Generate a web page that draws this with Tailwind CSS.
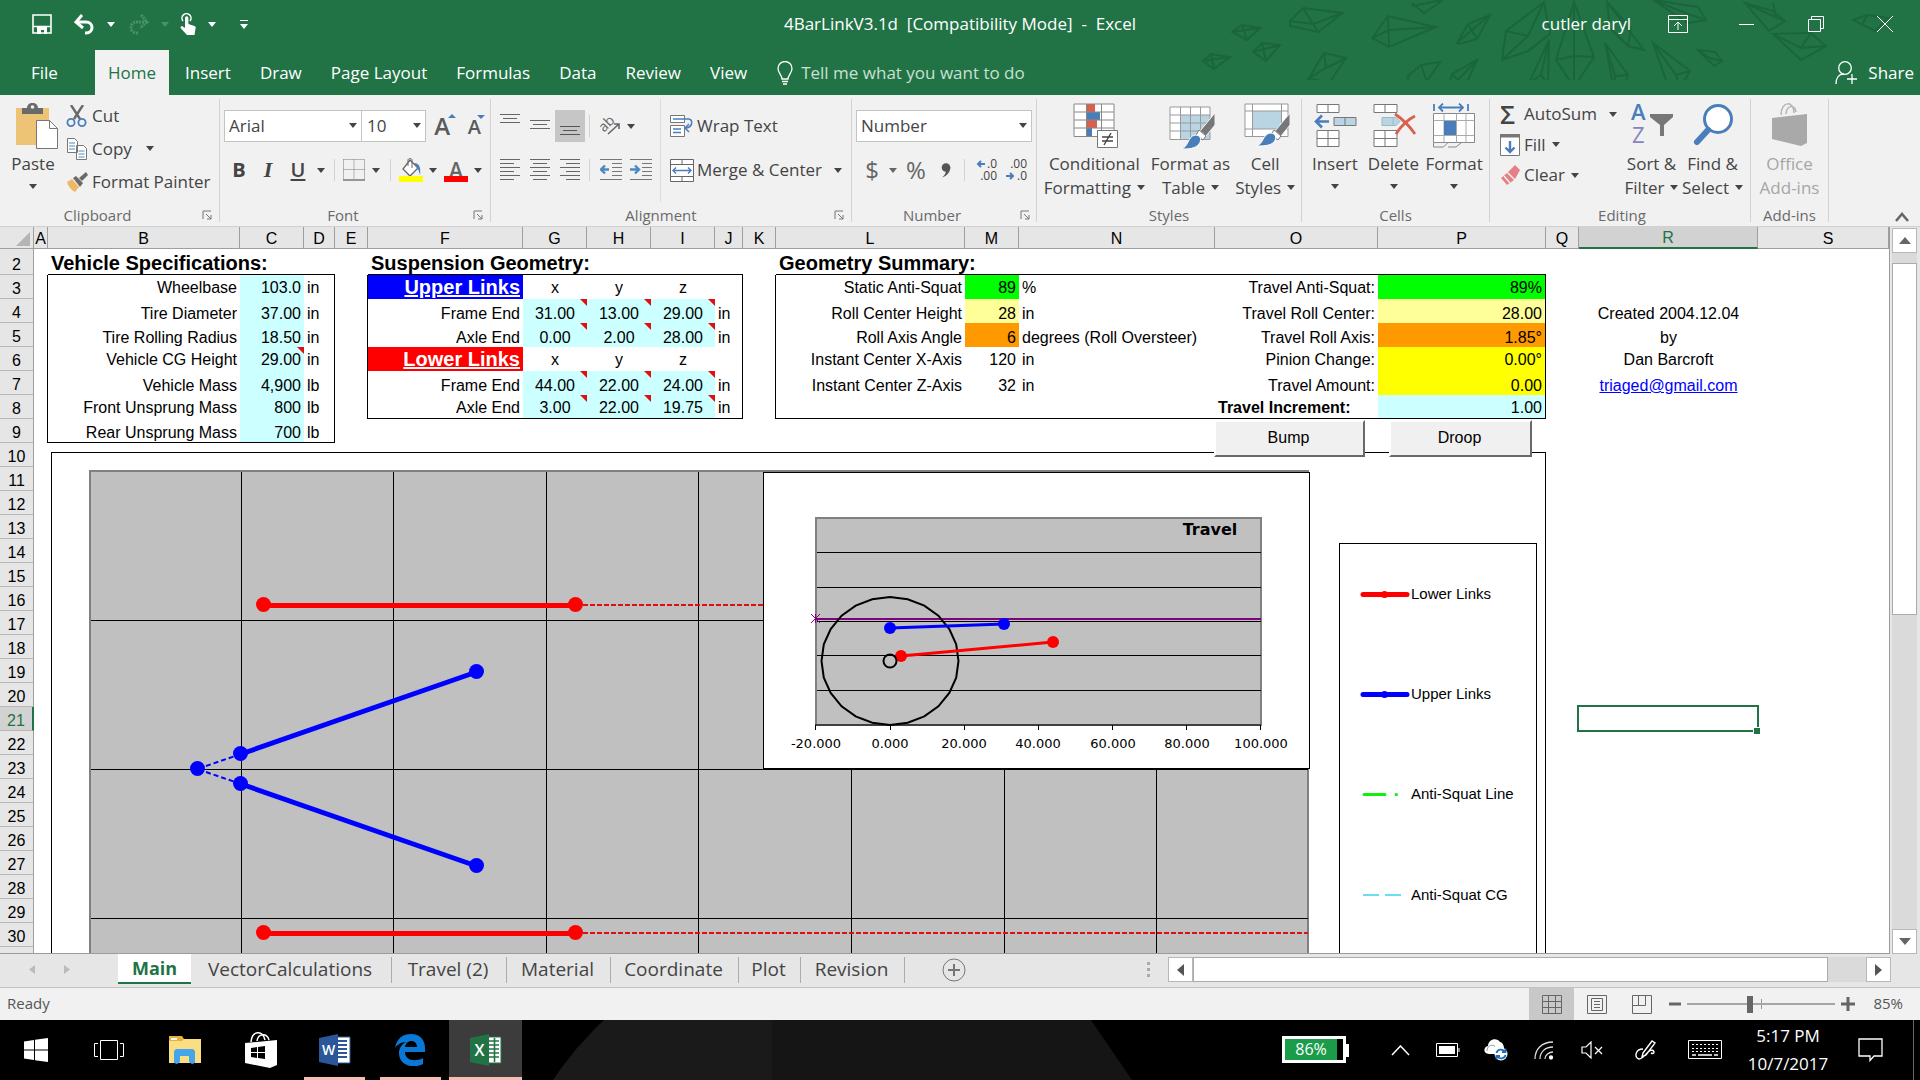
<!DOCTYPE html>
<html lang="en">

<head>
    <meta charset="UTF-8">
    <meta name="viewport" content="width=device-width, initial-scale=1.0">
    <title>4BarLinkV3.1d - Excel</title>
    <!-- Tailwindcss -->
    <script src="https://cdn.jsdelivr.net/npm/@tailwindcss/browser@4"></script>
</head>

<body class="h-screen flex flex-col overflow-hidden bg-[#e6e6e6] font-['Open_Sans',sans-serif] text-[17px] leading-6 text-[#444]">

    <!-- shared symbols -->
    <svg class="hidden">
        <symbol id="caret" viewBox="0 0 8 5"><path d="M0 0h8L4 5z" fill="currentColor" /></symbol>
        <symbol id="launcher" viewBox="0 0 10 10"><path d="M1 9V1h8M4 4l5 5M9 5v4H5" fill="none" stroke="#777" /></symbol>
    </svg>

    <!-- Title bar + tabs -->
    <header class="relative h-[95px] shrink-0 bg-[#217346] text-white">
        <svg class="absolute right-0 top-0 w-[720px] h-[80px]" viewBox="1200 0 720 80" fill="none" stroke="#1b653c" stroke-width="2">
            <path d="M1232 32l10-7 18 3-13 12zM1232 32l28-4M1242 25l5 15M1253 52l9-9 18 2-14 16zM1253 52l27-7M1262 43l4 18M1203 61l8-7 19 3-16 12zM1203 61l27-4M1211 54l3 15" />
            <path d="M1290 21l13-13 40 5-25 19-28-6zM1303 8l10 16 30-11M1290 21l23 3 5 8M1372 38l16-22 48 11-47 20zM1372 38l17-8 47-3M1388 16l1 31M1309 78l15-25 22 5-16 24-22-3zM1309 78l17-10 20-10M1324 53l2 15M1408 76l13-11 19-3-13 19-18 3zM1421 65l6 16" />
            <path d="M1457 43l11-19 22-9-13 24-18 5zM1457 43l16-14 17-14M1468 24l9 15M1412 6l30-6M1412 3l12 10 18-12M1447 91l5-17 25-14-8 18-6 14M1452 74l6 6 19-20" />
            <path d="M1502 60l4-29 38-29 6 32-22 17zM1506 31l22 5 16-34M1528 36l-26 24M1556 60l18-58 20 55-20 30zM1556 60l18-4 20 1M1574 2v85M1529 83l20-43-1 44-9 8zM1529 83l12-8 8-35M1541 75l7 9M1605 43l23 32-5 14-8 6zM1605 43l10 33v19M1615 76l13-1M1653 43l37 28-10 17-12-2zM1653 43l23 32 14-4M1676 75l4 13" />
            <path d="M1607 2l37 48-16-4-18-18zM1607 2l24 26-3 18M1653 0l45 7 8 13-18 3zM1653 0l35 14 18 6M1698 50l17 2 7 9-8 5zM1698 50l12 8 12 3M1745 3l28 8 12 10-16 10zM1745 3l30 14 10 4M1773 3l3 14M1773 34l38-1 15 13-25 14zM1773 34l28 14 25-2M1811 33l-10 15M1853 20l14-5 21 3-13 13zM1867 15l-5 10" />
        </svg>

        <div class="relative grid grid-cols-[1fr_auto_1fr] items-center h-[46px] pt-[2px]">
            <div class="flex items-center pl-[32px]">
                <button aria-label="Save" class="w-[20px]"><svg class="w-[20px] h-[20px]" viewBox="0 0 20 20"><path d="M1 1h18v18H1zM1 12.500h18" fill="none" stroke="#fff" stroke-width="1.600" /><path d="M5 13h10v7h-3v-4H9v4H5z" fill="#fff" /></svg></button>
                <button aria-label="Undo" class="ml-[21px] w-[22px]"><svg class="w-[22px] h-[21px]" viewBox="0 0 22 21" fill="none" stroke="#fff" stroke-width="3"><path d="M3 8h10c8 0 8 11 0 11h-1" /><path d="M9 1L3 8l7 6" /></svg></button>
                <svg class="ml-[12px] w-[8px] h-[5px]"><use href="#caret" /></svg>
                <button aria-label="Redo" class="ml-[13px] w-[22px] text-[#4b9068]"><svg class="w-[22px] h-[21px]" viewBox="0 0 22 21" fill="none" stroke="currentColor" stroke-width="3" stroke-dasharray="2 1"><path d="M19 8H9C1 8 1 19 9 19h1" /><path d="M13 1l6 7-7 6" /></svg></button>
                <svg class="ml-[11px] w-[8px] h-[5px] text-[#4b9068]"><use href="#caret" /></svg>
                <button aria-label="Touch mode" class="ml-[11px] w-[16px]"><svg class="w-[16px] h-[22px]" viewBox="0 0 16 22"><path d="M3 8a4.500 4.500 0 1 1 7 0" fill="none" stroke="#fff" stroke-width="1.500" /><path d="M5 5a1.700 1.700 0 0 1 3.400 0v6l6 2c1 .4 1.400 1 1.200 2L14.500 22H7L1 15.500c-1.400-1.800.8-3 2.200-1.800L5 15z" fill="#fff" /></svg></button>
                <svg class="ml-[12px] w-[8px] h-[5px]"><use href="#caret" /></svg>
                <button aria-label="Customize" class="ml-[24px]"><svg class="w-[8px] h-[9px]" viewBox="0 0 8 9" fill="#fff"><path d="M0 0h8v1H0zM0 4h8L4 9z" /></svg></button>
            </div>
            <h1 class="whitespace-pre">4BarLinkV3.1d  [Compatibility Mode]  -  Excel</h1>
            <div class="flex items-center justify-end pr-px">
                <span class="mr-[12px]">cutler daryl</span>
                <button aria-label="Ribbon options" class="w-[69px] flex justify-center"><svg class="w-[20px] h-[18px]" viewBox="0 0 20 18" fill="none" stroke="#fff"><path d="M.5.5h19v17H.5zM.5 4.500h19M10 15V7M6 11l4-4 4 4" /></svg></button>
                <button aria-label="Minimize" class="w-[69px] flex justify-center"><svg class="w-[15px] h-[15px]" viewBox="0 0 15 15" stroke="#fff"><path d="M0 7.500h15" /></svg></button>
                <button aria-label="Restore" class="w-[69px] flex justify-center"><svg class="w-[16px] h-[16px]" viewBox="0 0 16 16" fill="none" stroke="#fff"><path d="M.5 3.500h12v12H.5zM3.500 3.500v-3h12v12h-3" /></svg></button>
                <button aria-label="Close" class="w-[69px] flex justify-center"><svg class="w-[16px] h-[16px]" viewBox="0 0 16 16" stroke="#fff"><path d="M0 0l16 16M16 0L0 16" /></svg></button>
            </div>
        </div>

        <nav class="relative flex items-stretch h-[49px] pt-1">
            <a href="#" class="w-[95px] pl-[31px] flex items-center">File</a>
            <a href="#" class="px-[13px] flex items-center bg-[#f1f1f1] text-[#217346]">Home</a>
            <a href="#" class="pl-[16px] pr-[14px] flex items-center">Insert</a>
            <a href="#" class="pl-[15px] pr-[14px] flex items-center">Draw</a>
            <a href="#" class="pl-[15px] pr-[14px] flex items-center">Page Layout</a>
            <a href="#" class="pl-[15px] pr-[14px] flex items-center">Formulas</a>
            <a href="#" class="pl-[15px] pr-[14px] flex items-center">Data</a>
            <a href="#" class="pl-[15px] pr-[14px] flex items-center">Review</a>
            <a href="#" class="pl-[15px] pr-[14px] flex items-center">View</a>
            <label class="flex items-center flex-1 ml-4" aria-label="Tell me">
                <svg class="w-[16px] h-[24px] mr-2" viewBox="0 0 16 24" fill="none" stroke="#fff" stroke-width="1.300"><path d="M5 18c0-4-4-6-4-10.500a7 7 0 0 1 14 0C15 12 11 14 11 18zM5 20.500h6M6 23h4" /></svg>
                <input type="text" placeholder="Tell me what you want to do" class="w-[300px] bg-transparent outline-none placeholder:text-[#c9e0d2]">
            </label>
            <button class="flex items-center pr-[6px]">
                <svg class="w-[23px] h-[24px] mr-[10px]" viewBox="0 0 23 24" fill="none" stroke="#fff" stroke-width="1.300"><circle cx="10" cy="7" r="6.300" /><path d="M1 23c0-6 3-10 8-10M17 13v10M12 18h10" /></svg>
                Share
            </button>
        </nav>
    </header>

    <!-- Ribbon -->
    <section class="flex h-[132px] shrink-0 bg-[#f1f1f1] border-b border-[#d0d0d0] pt-1 pb-1">

        <div class="w-[220px] flex flex-col border-r border-[#d2d2d2]">
            <div class="flex-1 flex">
                <button class="w-[66px] flex flex-col items-center pt-1">
                    <svg class="w-[42px] h-[46px] mb-[3px] ml-2" viewBox="0 0 42 46">
                        <path d="M0 5h33v37H0z" fill="#edc375" /><path d="M6 5h5c0-7 11-7 11 0h5v6H6z" fill="#6a6a6a" /><circle cx="16.500" cy="4" r="1.800" fill="#f1f1f1" />
                        <path d="M20.500 17.500h13l8 8v20h-21z" fill="#fff" stroke="#777" /><path d="M33.500 17.500v8h8" fill="none" stroke="#777" />
                    </svg>
                    Paste
                    <svg class="w-[8px] h-[5px] mt-2"><use href="#caret" /></svg>
                </button>
                <div class="flex flex-col">
                    <button class="h-[33px] flex items-center"><svg class="w-[22px] h-[22px] mr-[4px]" viewBox="0 0 22 22" fill="none"><path d="M5 0l9 14M17 0L8 14" stroke="#6a6a6a" stroke-width="2.400" /><circle cx="5" cy="17.500" r="3.600" stroke="#4a7ebb" stroke-width="1.800" /><circle cx="16" cy="17.500" r="3.600" stroke="#4a7ebb" stroke-width="1.800" /></svg>Cut</button>
                    <button class="h-[33px] flex items-center"><svg class="w-[22px] h-[22px] mr-[4px]" viewBox="0 0 22 22" fill="#fff" stroke="#777"><path d="M1.500.5h7l3 3v11h-10zM10.500 7.500h7l3 3v11h-10z" /><path d="M3 5h6M3 8h6M3 11h6M12.500 13h6M12.500 16h6M12.500 19h6" stroke="#4a8ac0" /></svg>Copy<svg class="w-[8px] h-[5px] ml-[14px]"><use href="#caret" /></svg></button>
                    <button class="h-[33px] flex items-center whitespace-nowrap"><svg class="w-[22px] h-[20px] mr-[4px]" viewBox="0 0 22 20"><path d="M1 10l5-3 7 8-4 5C5 18 2 14 1 10z" fill="#edb968" /><path d="M7 6l3-2 7 7-3 4z" fill="#6a6a6a" /><path d="M13 6l7-6 2 3-6 6z" fill="#6a6a6a" /></svg>Format Painter</button>
                </div>
            </div>
            <div class="relative h-5 pt-[6px] flex justify-center items-center text-[15px] text-[#6a6a6a] pr-6">Clipboard<svg class="absolute right-[7px] bottom-[2px] w-[10px] h-[10px]"><use href="#launcher" /></svg></div>
        </div>

        <div class="w-[271px] flex flex-col border-r border-[#d2d2d2] px-1">
            <div class="flex-1 flex flex-col pt-[11px]">
                <div class="flex items-center h-[32px]">
                    <span class="relative"><select aria-label="Font" class="appearance-none block w-[138px] h-[32px] bg-white border border-[#c0c6c0] pl-1"><option>Arial</option></select><svg class="absolute right-[5px] top-[13px] w-[8px] h-[5px] pointer-events-none"><use href="#caret" /></svg></span>
                    <span class="relative"><select aria-label="Font size" class="appearance-none block w-[64px] h-[32px] bg-white border border-l-0 border-[#c0c6c0] pl-[5px]"><option>10</option></select><svg class="absolute right-[5px] top-[13px] w-[8px] h-[5px] pointer-events-none"><use href="#caret" /></svg></span>
                    <button aria-label="Grow font" class="relative w-[28px] pr-[4px] text-right text-[24px] font-semibold text-[#5a5a5a]">A<svg class="absolute -right-[2px] top-0 w-[8px] h-[4px]"><path d="M0 4l4-4 4 4z" fill="#4a7ebb" /></svg></button>
                    <button aria-label="Shrink font" class="relative w-[28px] pr-px pt-[2px] text-right text-[20px] font-semibold text-[#5a5a5a]">A<svg class="absolute -right-[3px] top-[2px] w-[8px] h-[4px]"><path d="M0 0h8L4 4z" fill="#4a7ebb" /></svg></button>
                </div>
                <div class="flex items-center h-[32px] mt-3 text-[20px]">
                    <button class="w-[30px] font-bold">B</button>
                    <button class="w-[28px] font-bold italic font-['Liberation_Serif',serif] text-[22px]">I</button>
                    <button class="w-[32px] font-semibold underline underline-offset-2">U</button>
                    <span class="w-[14px] flex justify-center"><svg class="w-[8px] h-[5px]"><use href="#caret" /></svg></span>
                    <span class="w-px h-[22px] mx-[6px] bg-[#d2d2d2]"></span>
                    <button aria-label="Borders" class="w-[26px] flex justify-center"><svg class="w-[22px] h-[22px]" viewBox="0 0 22 22" fill="none" stroke="#777"><path d="M.5.5h21v20M.5.5v20M11 .5v20M.5 10.500h21" stroke-dasharray="1 1" /><path d="M0 21h22" stroke-width="1.500" /></svg></button>
                    <span class="w-[18px] flex justify-center"><svg class="w-[8px] h-[5px]"><use href="#caret" /></svg></span>
                    <span class="w-px h-[22px] mx-[5px] bg-[#d2d2d2]"></span>
                    <button aria-label="Fill color" class="w-[30px] flex justify-center"><svg class="w-[24px] h-[24px]" viewBox="0 0 24 24"><path d="M11 2l8 8-8 8-7-7z" fill="#fff" stroke="#666" stroke-width="1.300" /><path d="M9 8V2c0-2 4-2 4 0v8" fill="none" stroke="#666" /><path d="M15 5c5 0 7 4 6 12-1-3-1-5-3-7z" fill="#4a7ebb" /><path d="M0 18h24v6H0z" fill="#ff0" /></svg></button>
                    <span class="w-[14px] flex justify-center"><svg class="w-[8px] h-[5px]"><use href="#caret" /></svg></span>
                    <button aria-label="Font color" class="relative w-[32px] h-[24px] leading-[18px] text-[21px] font-semibold text-[#666]">A<span class="absolute left-1 bottom-0 w-[24px] h-[6px] bg-[#f00]"></span></button>
                    <span class="w-[12px] flex justify-center"><svg class="w-[8px] h-[5px]"><use href="#caret" /></svg></span>
                </div>
            </div>
            <div class="relative h-5 pt-[6px] flex justify-center items-center text-[15px] text-[#6a6a6a] pr-6">Font<svg class="absolute right-[3px] bottom-[2px] w-[10px] h-[10px]"><use href="#launcher" /></svg></div>
        </div>

        <div class="w-[361px] flex flex-col border-r border-[#d2d2d2] pl-1">
            <div class="flex-1 flex">
                <div class="flex flex-col pt-[11px] w-[166px] border-r border-[#dcdcdc]">
                    <div class="flex items-center h-[32px]">
                        <button aria-label="Top align" class="w-[30px] h-full flex justify-center"><svg class="w-[20px] h-[32px]" stroke="#666" fill="none"><path d="M0 4.500h20M3 8.500h14M0 12.500h20" /></svg></button>
                        <button aria-label="Middle align" class="w-[30px] h-full flex justify-center"><svg class="w-[20px] h-[32px]" stroke="#666" fill="none"><path d="M0 10.500h20M3 14.500h14M0 18.500h20" /></svg></button>
                        <button aria-label="Bottom align" class="w-[30px] h-full flex justify-center bg-[#c6c6c6]"><svg class="w-[20px] h-[32px]" stroke="#555" fill="none"><path d="M0 16.500h20M3 20.500h14M0 24.500h20" /></svg></button>
                        <span class="w-px h-[22px] mx-1 bg-[#d2d2d2]"></span>
                        <button aria-label="Orientation" class="w-[32px] flex justify-center"><svg class="w-[22px] h-[20px] overflow-visible" viewBox="0 0 22 20" fill="none" stroke="#666" stroke-width="1.600"><text x="0" y="13" font-family="Open Sans" font-size="14" fill="#666" stroke="none" transform="rotate(-45 7 9)">ab</text><path d="M9 18L20 8M15 8h5v5" /></svg></button>
                        <span class="w-[10px] flex justify-center"><svg class="w-[8px] h-[5px]"><use href="#caret" /></svg></span>
                    </div>
                    <div class="flex items-center h-[32px] mt-3">
                        <button aria-label="Align left" class="w-[30px] flex justify-center"><svg class="w-[20px] h-[22px]" stroke="#666" fill="none"><path d="M0 .5h20M0 4.500h14M0 8.500h20M0 12.500h14M0 16.500h20M0 20.500h14" /></svg></button>
                        <button aria-label="Center" class="w-[30px] flex justify-center"><svg class="w-[20px] h-[22px]" stroke="#666" fill="none"><path d="M0 .5h20M3 4.500h14M0 8.500h20M3 12.500h14M0 16.500h20M3 20.500h14" /></svg></button>
                        <button aria-label="Align right" class="w-[30px] flex justify-center"><svg class="w-[20px] h-[22px]" stroke="#666" fill="none"><path d="M0 .5h20M6 4.500h14M0 8.500h20M6 12.500h14M0 16.500h20M6 20.500h14" /></svg></button>
                        <span class="w-px h-[22px] ml-1 mr-[6px] bg-[#d2d2d2]"></span>
                        <button aria-label="Decrease indent" class="w-[30px] flex justify-center"><svg class="w-[22px] h-[22px]" fill="none" stroke="#777"><path d="M0 .5h22M12 4.500h10M12 8.500h10M12 12.500h10M12 16.500h10M0 20.500h22" /><path d="M9 10.500H2M5 6.500l-4 4 4 4" stroke="#4a8ac0" stroke-width="2.400" /></svg></button>
                        <button aria-label="Increase indent" class="w-[30px] flex justify-center"><svg class="w-[22px] h-[22px]" fill="none" stroke="#777"><path d="M0 .5h22M12 4.500h10M12 8.500h10M12 12.500h10M12 16.500h10M0 20.500h22" /><path d="M0 10.500h8M5 6.500l4 4-4 4" stroke="#4a8ac0" stroke-width="2.400" /></svg></button>
                    </div>
                </div>
                <div class="flex flex-col pt-[11px] pl-[9px]">
                    <button class="flex items-center h-[32px] whitespace-nowrap"><svg class="w-[24px] h-[22px] mr-[3px]" viewBox="0 0 24 22" fill="none" stroke="#777"><path d="M.5.5h14v7H.5zM.5 10.500h14v11H.5z" fill="#fff" /><path d="M3 4h16c4 1 4 8-3 9M19 9l-4 4 4 4M3 14h8M3 17.500h8" stroke="#4a7ebb" stroke-width="1.500" /></svg>Wrap Text</button>
                    <button class="flex items-center h-[32px] mt-3 whitespace-nowrap"><svg class="w-[24px] h-[23px] mr-[3px]" viewBox="0 0 24 23" fill="none" stroke="#666"><path d="M.5.5h23v22H.5zM.5 5.500h23M.5 17.500h23M12 .5v5M12 17.500v5" fill="#fff" /><path d="M3 11.500h18M6 8.500l-3 3 3 3M18 8.500l3 3-3 3" stroke="#4a7ebb" stroke-width="1.400" /></svg>Merge &amp; Center<svg class="w-[8px] h-[5px] ml-3"><use href="#caret" /></svg></button>
                </div>
            </div>
            <div class="relative h-5 pt-[6px] flex justify-center items-center text-[15px] text-[#6a6a6a] pr-6">Alignment<svg class="absolute right-[7px] bottom-[2px] w-[10px] h-[10px]"><use href="#launcher" /></svg></div>
        </div>

        <div class="w-[185px] flex flex-col border-r border-[#d2d2d2] px-1">
            <div class="flex-1 flex flex-col pt-[11px]">
                <span class="relative"><select aria-label="Number format" class="appearance-none block w-full h-[32px] bg-white border border-[#c0c6c0] pl-1"><option>Number</option></select><svg class="absolute right-[5px] top-[13px] w-[8px] h-[5px] pointer-events-none"><use href="#caret" /></svg></span>
                <div class="flex items-center h-[32px] mt-3 text-[#666]">
                    <button class="w-[32px] text-[24px]">$</button>
                    <span class="w-[10px] flex justify-center"><svg class="w-[8px] h-[5px]"><use href="#caret" /></svg></span>
                    <button class="w-[36px] text-[24px]">%</button>
                    <button aria-label="Comma style" class="w-[24px] flex justify-center"><svg class="w-[10px] h-[15px]" viewBox="0 0 10 15"><circle cx="5" cy="4.500" r="4.300" fill="#555" /><path d="M9.300 4C9.500 9 6 13 1 14.500 4 12 5 10 5 7z" fill="#555" /></svg></button>
                    <span class="w-px h-[22px] mx-[6px] bg-[#d2d2d2]"></span>
                    <button class="relative w-[30px] h-[24px] pr-1 flex flex-col items-end justify-between text-[12px] leading-3 text-[#444]"><svg class="absolute left-[5px] top-[2px] w-[9px] h-[8px]"><path d="M9 4H2M5 1L2 4l3 3" fill="none" stroke="#4a7ebb" stroke-width="2" /></svg><span>.0</span><span>.00</span></button>
                    <button class="relative w-[30px] h-[24px] pr-1 flex flex-col items-end justify-between text-[12px] leading-3 text-[#444]"><svg class="absolute left-[5px] bottom-[2px] w-[9px] h-[8px]"><path d="M0 4h7M4 1l3 3-3 3" fill="none" stroke="#4a7ebb" stroke-width="2" /></svg><span>.00</span><span>.0</span></button>
                </div>
            </div>
            <div class="relative h-5 pt-[6px] flex justify-center items-center text-[15px] text-[#6a6a6a] pr-6">Number<svg class="absolute right-[2px] bottom-[2px] w-[10px] h-[10px]"><use href="#launcher" /></svg></div>
        </div>

        <div class="w-[265px] flex flex-col border-r border-[#d2d2d2] px-1">
            <div class="flex-1 flex pt-1">
                <button class="w-[107px] flex flex-col items-center">
                    <svg class="w-[46px] h-[46px] mb-[3px] ml-1" viewBox="0 0 46 46">
                        <path d="M1 1h40v33H1z" fill="#fff" /><path d="M13 1h9v8h-9zM13 17h11v8H13z" fill="#d9604c" /><path d="M13 9h14v8H13zM13 25h6v8h-6z" fill="#4a7ebb" />
                        <path d="M1 1h40v32.500H1zM13.500 1v32M28.500 1v32M1 9h40M1 17h40M1 25h40" fill="none" stroke="#888" /><path d="M24.500 27.500h20v17h-20z" fill="#fff" stroke="#777" /><path d="M29 34h11M29 38h11M38 30l-7 12" stroke="#444" stroke-width="1.400" />
                    </svg>
                    <span>Conditional<br>Formatting<svg class="inline w-[8px] h-[5px] ml-[6px] mb-1"><use href="#caret" /></svg></span>
                </button>
                <button class="w-[86px] flex flex-col items-center">
                    <svg class="w-[46px] h-[46px] mb-[3px] ml-1" viewBox="0 0 46 46">
                        <path d="M1 4h40v32H1z" fill="#fff" /><path d="M11 12h30v24H11z" fill="#b9d5e4" /><path d="M1 4h40v32.500H1zM11.500 4v32M21.500 4v32M31.500 4v32M1 12h40M1 20h40M1 28h40" fill="none" stroke="#999" />
                        <path d="M46 10v12l-9 11-6-5z" fill="#777" stroke="#f1f1f1" /><path d="M30 27l7 6-3 4-7-5z" fill="#fff" stroke="#777" /><path d="M12 46c8-2 6-12 14-14 6 0 7 5 4 9-4 5-11 5-18 5z" fill="#4a7ebb" stroke="#fff" />
                    </svg>
                    <span class="whitespace-nowrap">Format as<br>Table<svg class="inline w-[8px] h-[5px] ml-[6px] mb-1"><use href="#caret" /></svg></span>
                </button>
                <button class="w-[64px] flex flex-col items-center">
                    <svg class="w-[46px] h-[46px] mb-[3px] ml-1" viewBox="0 0 46 46">
                        <path d="M1 1h43v32H1z" fill="#fff" /><path d="M8 8h29v18H8z" fill="#b9d5e4" /><path d="M1 1h43v32.500H1zM8.500 1v32M37.500 1v32M1 8h43M1 26h43" fill="none" stroke="#999" />
                        <path d="M46 10v12l-9 11-6-5z" fill="#777" stroke="#f1f1f1" /><path d="M30 27l7 6-3 4-7-5z" fill="#fff" stroke="#777" /><path d="M12 43c8-2 6-11 14-13 6 0 7 5 4 9-4 4-11 4-18 4z" fill="#4a7ebb" stroke="#fff" />
                    </svg>
                    <span>Cell<br>Styles<svg class="inline w-[8px] h-[5px] ml-[6px] mb-1"><use href="#caret" /></svg></span>
                </button>
            </div>
            <div class="h-5 pt-[6px] flex justify-center items-center text-[15px] text-[#6a6a6a]">Styles</div>
        </div>

        <div class="w-[188px] flex flex-col border-r border-[#d2d2d2] px-1">
            <div class="flex-1 flex pt-1">
                <button class="w-[58px] flex flex-col items-center">
                    <svg class="w-[44px] h-[46px] mb-[3px]" viewBox="0 0 44 46" fill="#fff" stroke="#777">
                        <path d="M4 1.500h22v8H4zM15 1.500v8M4 27.500h22v16H4zM15 27.500v16M4 35.500h22" /><path d="M21 14.500h22v8H21zM32 14.500v8" fill="#b9d5e4" /><path d="M16 18.500H3M9 12.500l-6 6 6 6" fill="none" stroke="#4a7ebb" stroke-width="2.600" />
                    </svg>
                    Insert
                    <svg class="w-[8px] h-[5px] mt-2"><use href="#caret" /></svg>
                </button>
                <button class="w-[60px] flex flex-col items-center">
                    <svg class="w-[44px] h-[46px] mb-[3px]" viewBox="0 0 44 46" fill="#fff" stroke="#777">
                        <path d="M2 1.500h23v8H2zM13 1.500v8M2 27.500h23v16H2zM13 27.500v16M2 35.500h23" /><path d="M10 14.500h14l4 4-4 4H10zM21 14.500v8" fill="#b9d5e4" stroke="#9bb" /><path d="M23 11c6 4 13 10 20 20M43 13c-8 4-14 10-19 18" fill="none" stroke="#d9604c" stroke-width="2.800" />
                    </svg>
                    Delete
                    <svg class="w-[8px] h-[5px] mt-2"><use href="#caret" /></svg>
                </button>
                <button class="w-[62px] flex flex-col items-center">
                    <svg class="w-[42px] h-[46px] mb-[3px]" viewBox="0 0 42 46" fill="none" stroke="#888">
                        <path d="M1 1v7M35 1v7M6 4.500h24M10 .5l-4 4 4 4M26 .5l4 4-4 4" stroke="#4a7ebb" stroke-width="1.800" /><path d="M.5 10.500h41v29H.5z" fill="#fff" /><path d="M11 10.500v29M23.500 10.500v29M33 10.500v29M.5 17.500h41M.5 32.500h41" stroke="#aaa" /><path d="M11 18h12v14H11z" fill="#4a7ebb" stroke="none" /><path d="M.5 40v4h10l4-4M15 44h8l5-4" />
                    </svg>
                    Format
                    <svg class="w-[8px] h-[5px] mt-2"><use href="#caret" /></svg>
                </button>
            </div>
            <div class="h-5 pt-[6px] flex justify-center items-center text-[15px] text-[#6a6a6a]">Cells</div>
        </div>

        <div class="w-[261px] flex flex-col border-r border-[#d2d2d2] pl-[10px] pr-[6px]">
            <div class="flex-1 flex">
                <div class="w-[124px] flex flex-col">
                    <button class="h-[30px] flex items-center"><span class="w-[24px] text-left text-[26px] font-semibold leading-6">Σ</span>AutoSum<svg class="w-[8px] h-[5px] ml-3"><use href="#caret" /></svg></button>
                    <button class="h-[31px] flex items-center"><svg class="w-[20px] h-[22px] mr-1" viewBox="0 0 20 22"><path d="M.5.5h19v21H.5z" fill="#fff" stroke="#777" /><path d="M0 0h20v3.500H0z" fill="#777" /><path d="M10 7v11M5.500 13.500L10 18l4.500-4.500" fill="none" stroke="#4a7ebb" stroke-width="2.400" /></svg>Fill<svg class="w-[8px] h-[5px] ml-[6px]"><use href="#caret" /></svg></button>
                    <button class="h-[30px] flex items-center"><svg class="w-[20px] h-[20px] mr-1" viewBox="0 0 20 20" fill="#e47f85"><path d="M8 7l7-7 5 5-5 9zM7 8l7 7-7 5-6-7z" /><path d="M4 11l6 7" stroke="#f1f1f1" stroke-width="1.500" /></svg>Clear<svg class="w-[8px] h-[5px] ml-[6px]"><use href="#caret" /></svg></button>
                </div>
                <button class="w-[60px] flex flex-col items-center pt-1">
                    <svg class="w-[42px] h-[46px] mb-[3px] overflow-visible" viewBox="0 0 42 46" fill="none">
                        <g font-family="Open Sans" font-size="22"><text x="0" y="17" fill="#4a7ebb" font-weight="600">A</text><text x="1" y="40" fill="#8684c0">Z</text></g><path d="M19 11h23v3l-9 8v11h-4V22l-10-8z" fill="#777" />
                    </svg>
                    <span class="whitespace-nowrap">Sort &amp;<br>Filter<svg class="inline w-[8px] h-[5px] ml-[6px] mb-1"><use href="#caret" /></svg></span>
                </button>
                <button class="w-[64px] flex flex-col items-center pt-1">
                    <svg class="w-[42px] h-[46px] mb-[3px]" viewBox="0 0 42 46"><circle cx="26" cy="16" r="13.500" fill="#fff" stroke="#4a7ebb" stroke-width="3" /><path d="M16 27L5 39" stroke="#4a7ebb" stroke-width="6" stroke-linecap="round" /></svg>
                    <span class="whitespace-nowrap">Find &amp;<br>Select<svg class="inline w-[8px] h-[5px] ml-[6px] mb-1"><use href="#caret" /></svg></span>
                </button>
            </div>
            <div class="h-5 pt-[6px] flex justify-center items-center text-[15px] text-[#6a6a6a]">Editing</div>
        </div>

        <div class="w-[78px] flex flex-col border-r border-[#d2d2d2]">
            <div class="flex-1 flex justify-center pt-1">
                <button disabled class="flex flex-col items-center text-[#a6a6a6]">
                    <svg class="w-[36px] h-[46px] mb-[3px]" viewBox="0 0 36 46"><path d="M0 15l35-4v29l-6 3-29-7z" fill="#a9a9a9" /><path d="M9 12c0-14 13-15 13-2M14 11c1-10 9-9 10-2" fill="none" stroke="#b5b5b5" stroke-width="1.500" /></svg>
                    <span class="whitespace-nowrap">Office<br>Add-ins</span>
                </button>
            </div>
            <div class="h-5 pt-[6px] flex justify-center items-center text-[15px] text-[#6a6a6a]">Add-ins</div>
        </div>

        <div class="flex-1 flex items-end justify-end pr-[11px]">
            <button aria-label="Collapse ribbon"><svg class="w-[14px] h-[10px]" viewBox="0 0 14 10" fill="none" stroke="#666" stroke-width="2.500"><path d="M1 9l6-7 6 7" /></svg></button>
        </div>
    </section>

    <!-- Sheet -->
    <main class="flex-1 min-h-0 flex">
        <div class="relative flex-1 overflow-hidden bg-white border-r border-b border-[#9b9b9b] font-['Liberation_Sans',Arial,sans-serif] text-[16px] leading-[18px] text-black">
            <table class="table-fixed w-full border-separate border-spacing-0 whitespace-nowrap [&_td]:px-[3px] [&_td]:pb-0 [&_td]:pt-[2px] [&_th]:p-0">
                <colgroup>
                    <col class="w-[34px]"><col class="w-[14px]"><col class="w-[192px]"><col class="w-[64px]"><col class="w-[31px]"><col class="w-[33px]"><col class="w-[155px]"><col class="w-[64px]"><col class="w-[64px]"><col class="w-[64px]"><col class="w-[28px]"><col class="w-[33px]"><col class="w-[189px]"><col class="w-[54px]"><col class="w-[196px]"><col class="w-[163px]"><col class="w-[168px]"><col class="w-[33px]"><col class="w-[179px]"><col>
                </colgroup>
                <thead class="[&_th]:font-normal [&_th]:pt-[2px] [&_th]:bg-[#e6e6e6] [&_th]:border-r [&_th]:border-b [&_th]:border-[#9f9f9f]">
                    <tr class="h-[22px]">
                        <th><svg class="ml-[16px] w-[14px] h-[14px]"><path d="M14 0v14H0z" fill="#b4b4b4" /></svg></th>
                        <th>A</th><th>B</th><th>C</th><th>D</th><th>E</th><th>F</th><th>G</th><th>H</th><th>I</th><th>J</th><th>K</th><th>L</th><th>M</th><th>N</th><th>O</th><th>P</th><th>Q</th>
                        <th class="bg-[#d2d2d2]! border-b-2! border-b-[#217346]! text-[#217346]">R</th>
                        <th class="pl-[10px]!">S</th>
                    </tr>
                </thead>
                <tbody class="[&_th]:font-normal [&_th]:align-bottom [&_th]:bg-[#e6e6e6] [&_th]:border-r [&_th]:border-b [&_th]:border-r-[#9f9f9f] [&_th]:border-b-[#b8b8b8]">
                    <tr class="h-[26px] text-[20px] font-bold leading-[22px]">
                        <th class="text-[16px] leading-[18px]">2</th>
                        <td></td>
                        <td colspan="3" class="border-b">Vehicle Specifications:</td>
                        <td></td>
                        <td colspan="5" class="border-b">Suspension Geometry:</td>
                        <td></td>
                        <td colspan="5" class="border-b">Geometry Summary:</td>
                        <td colspan="3"></td>
                    </tr>
                    <tr class="h-6">
                        <th>3</th>
                        <td class="border-r"></td>
                        <td class="text-right">Wheelbase</td>
                        <td class="text-right bg-[#ccffff]">103.0</td>
                        <td class="border-r">in</td>
                        <td class="border-r"></td>
                        <td class="pt-0! text-right bg-[#0000ff] text-white text-[20px] font-bold underline">Upper Links</td>
                        <td class="text-center">x</td>
                        <td class="text-center">y</td>
                        <td class="text-center">z</td>
                        <td class="border-r"></td>
                        <td class="border-r"></td>
                        <td class="text-right">Static Anti-Squat</td>
                        <td class="text-right bg-[#00ff00]">89</td>
                        <td>%</td>
                        <td class="text-right">Travel Anti-Squat:</td>
                        <td class="text-right border-r bg-[#00ff00]">89%</td>
                        <td></td>
                        <td></td>
                        <td></td>
                    </tr>
                    <tr class="h-6 align-bottom">
                        <th>4</th>
                        <td class="border-r"></td>
                        <td class="text-right">Tire Diameter</td>
                        <td class="text-right bg-[#ccffff]">37.00</td>
                        <td class="border-r">in</td>
                        <td class="border-r"></td>
                        <td class="text-right">Frame End</td>
                        <td class="relative text-center bg-[#ccffff]">31.00<i class="absolute top-0 right-0 border-t-[7px] border-l-[7px] border-t-[#e01010] border-l-transparent"></i></td>
                        <td class="relative text-center bg-[#ccffff]">13.00<i class="absolute top-0 right-0 border-t-[7px] border-l-[7px] border-t-[#e01010] border-l-transparent"></i></td>
                        <td class="relative text-center bg-[#ccffff]">29.00<i class="absolute top-0 right-0 border-t-[7px] border-l-[7px] border-t-[#e01010] border-l-transparent"></i></td>
                        <td class="border-r">in</td>
                        <td class="border-r"></td>
                        <td class="text-right">Roll Center Height</td>
                        <td class="text-right bg-[#ffff99]">28</td>
                        <td>in</td>
                        <td class="text-right">Travel Roll Center:</td>
                        <td class="text-right border-r bg-[#ffff99]">28.00</td>
                        <td></td>
                        <td class="text-center">Created 2004.12.04</td>
                        <td></td>
                    </tr>
                    <tr class="h-6 align-bottom">
                        <th>5</th>
                        <td class="border-r"></td>
                        <td class="text-right">Tire Rolling Radius</td>
                        <td class="text-right bg-[#ccffff]">18.50</td>
                        <td class="border-r">in</td>
                        <td class="border-r"></td>
                        <td class="text-right">Axle End</td>
                        <td class="relative text-center bg-[#ccffff]">0.00<i class="absolute top-0 right-0 border-t-[7px] border-l-[7px] border-t-[#e01010] border-l-transparent"></i></td>
                        <td class="relative text-center bg-[#ccffff]">2.00<i class="absolute top-0 right-0 border-t-[7px] border-l-[7px] border-t-[#e01010] border-l-transparent"></i></td>
                        <td class="relative text-center bg-[#ccffff]">28.00<i class="absolute top-0 right-0 border-t-[7px] border-l-[7px] border-t-[#e01010] border-l-transparent"></i></td>
                        <td class="border-r">in</td>
                        <td class="border-r"></td>
                        <td class="text-right">Roll Axis Angle</td>
                        <td class="text-right bg-[#ff9900]">6</td>
                        <td>degrees (Roll Oversteer)</td>
                        <td class="text-right">Travel Roll Axis:</td>
                        <td class="text-right border-r bg-[#ff9900]">1.85°</td>
                        <td></td>
                        <td class="text-center">by</td>
                        <td></td>
                    </tr>
                    <tr class="h-6">
                        <th>6</th>
                        <td class="border-r"></td>
                        <td class="text-right">Vehicle CG Height</td>
                        <td class="relative text-right bg-[#ccffff]">29.00<i class="absolute top-0 right-0 border-t-[7px] border-l-[7px] border-t-[#e01010] border-l-transparent"></i></td>
                        <td class="border-r">in</td>
                        <td class="border-r"></td>
                        <td class="pt-0! text-right bg-[#ff0000] text-white text-[20px] font-bold underline">Lower Links</td>
                        <td class="text-center">x</td>
                        <td class="text-center">y</td>
                        <td class="text-center">z</td>
                        <td class="border-r"></td>
                        <td class="border-r"></td>
                        <td class="text-right">Instant Center X-Axis</td>
                        <td class="text-right">120</td>
                        <td>in</td>
                        <td class="text-right">Pinion Change:</td>
                        <td class="text-right border-r bg-[#ffff00]">0.00°</td>
                        <td></td>
                        <td class="text-center">Dan Barcroft</td>
                        <td></td>
                    </tr>
                    <tr class="h-6 align-bottom">
                        <th>7</th>
                        <td class="border-r"></td>
                        <td class="text-right">Vehicle Mass</td>
                        <td class="text-right bg-[#ccffff]">4,900</td>
                        <td class="border-r">lb</td>
                        <td class="border-r"></td>
                        <td class="text-right">Frame End</td>
                        <td class="relative text-center bg-[#ccffff]">44.00<i class="absolute top-0 right-0 border-t-[7px] border-l-[7px] border-t-[#e01010] border-l-transparent"></i></td>
                        <td class="relative text-center bg-[#ccffff]">22.00<i class="absolute top-0 right-0 border-t-[7px] border-l-[7px] border-t-[#e01010] border-l-transparent"></i></td>
                        <td class="relative text-center bg-[#ccffff]">24.00<i class="absolute top-0 right-0 border-t-[7px] border-l-[7px] border-t-[#e01010] border-l-transparent"></i></td>
                        <td class="border-r">in</td>
                        <td class="border-r"></td>
                        <td class="text-right">Instant Center Z-Axis</td>
                        <td class="text-right">32</td>
                        <td>in</td>
                        <td class="text-right">Travel Amount:</td>
                        <td class="text-right border-r bg-[#ffff00]">0.00</td>
                        <td></td>
                        <td class="text-center"><a href="#" class="text-[#0000ff] underline">triaged@gmail.com</a></td>
                        <td></td>
                    </tr>
                    <tr class="h-6">
                        <th>8</th>
                        <td class="border-r"></td>
                        <td class="text-right">Front Unsprung Mass</td>
                        <td class="text-right bg-[#ccffff]">800</td>
                        <td class="border-r">lb</td>
                        <td class="border-r"></td>
                        <td class="text-right border-b">Axle End</td>
                        <td class="relative text-center border-b bg-[#ccffff]">3.00<i class="absolute top-0 right-0 border-t-[7px] border-l-[7px] border-t-[#e01010] border-l-transparent"></i></td>
                        <td class="relative text-center border-b bg-[#ccffff]">22.00<i class="absolute top-0 right-0 border-t-[7px] border-l-[7px] border-t-[#e01010] border-l-transparent"></i></td>
                        <td class="relative text-center border-b bg-[#ccffff]">19.75<i class="absolute top-0 right-0 border-t-[7px] border-l-[7px] border-t-[#e01010] border-l-transparent"></i></td>
                        <td class="border-r border-b">in</td>
                        <td class="border-r"></td>
                        <td colspan="3" class="border-b"></td>
                        <td class="border-b font-bold">Travel Increment:</td>
                        <td class="text-right border-r border-b bg-[#ccffff]">1.00</td>
                        <td></td>
                        <td></td>
                        <td></td>
                    </tr>
                    <tr class="h-6 align-bottom">
                        <th>9</th>
                        <td class="border-r"></td>
                        <td class="text-right border-b">Rear Unsprung Mass</td>
                        <td class="text-right border-b bg-[#ccffff]">700</td>
                        <td class="border-r border-b">lb</td>
                        <td colspan="15"></td>
                    </tr>
                    <tr class="h-6"><th>10</th><td colspan="19"></td></tr>
                    <tr class="h-6"><th>11</th><td colspan="19"></td></tr>
                    <tr class="h-6"><th>12</th><td colspan="19"></td></tr>
                    <tr class="h-6"><th>13</th><td colspan="19"></td></tr>
                    <tr class="h-6"><th>14</th><td colspan="19"></td></tr>
                    <tr class="h-6"><th>15</th><td colspan="19"></td></tr>
                    <tr class="h-6"><th>16</th><td colspan="19"></td></tr>
                    <tr class="h-6"><th>17</th><td colspan="19"></td></tr>
                    <tr class="h-6"><th>18</th><td colspan="19"></td></tr>
                    <tr class="h-6"><th>19</th><td colspan="19"></td></tr>
                    <tr class="h-6"><th>20</th><td colspan="19"></td></tr>
                    <tr class="h-6">
                        <th class="bg-[#d2d2d2]! border-r-2! border-r-[#217346]! text-[#217346]">21</th>
                        <td colspan="17"></td>
                        <td class="relative"><div class="absolute -top-[2px] -left-[2px] right-[-1px] bottom-[-1px] border-2 border-[#217346]"><i class="absolute -right-[3px] -bottom-[4px] w-[7px] h-[7px] bg-[#217346] border-t border-l border-white"></i></div></td>
                        <td></td>
                    </tr>
                    <tr class="h-6"><th>22</th><td colspan="19"></td></tr>
                    <tr class="h-6"><th>23</th><td colspan="19"></td></tr>
                    <tr class="h-6"><th>24</th><td colspan="19"></td></tr>
                    <tr class="h-6"><th>25</th><td colspan="19"></td></tr>
                    <tr class="h-6"><th>26</th><td colspan="19"></td></tr>
                    <tr class="h-6"><th>27</th><td colspan="19"></td></tr>
                    <tr class="h-6"><th>28</th><td colspan="19"></td></tr>
                    <tr class="h-6"><th>29</th><td colspan="19"></td></tr>
                    <tr class="h-6"><th>30</th><td colspan="19"></td></tr>
                    <tr class="h-6"><th></th><td colspan="19"></td></tr>
                </tbody>
            </table>

            <!-- Chart object floating over the cells -->
            <svg class="absolute left-[51px] top-[225px] w-[1495px] h-[502px]" viewBox="51 452 1495 502" fill="none" font-family="Liberation Sans">
                <rect x="51.500" y="452.500" width="1494" height="600" fill="#fff" stroke="#000" />
                <!-- plan view -->
                <rect x="90" y="471" width="1218" height="600" fill="#c0c0c0" stroke="#808080" stroke-width="2" />
                <path d="M241.500 472v490M393.500 472v490M546.500 472v490M698.500 472v490M851.500 472v490M1004.500 472v490M1156.500 472v490M91 620.500h1217M91 769.500h1217M91 918.500h1217" stroke="#000" />
                <path d="M576 605h732M576 933h732" stroke="#e01010" stroke-width="2" stroke-dasharray="5 2" />
                <path d="M263 605.500h313M263 933.500h313" stroke="#f00" stroke-width="5" />
                <g fill="#f00"><circle cx="263.500" cy="604.500" r="7.500" /><circle cx="575.500" cy="604.500" r="7.500" /><circle cx="263.500" cy="932.500" r="7.500" /><circle cx="575.500" cy="932.500" r="7.500" /></g>
                <path d="M241 754l-44 15 44 15" stroke="#00f" stroke-width="2" stroke-dasharray="5 3" />
                <path d="M241 754l235.500-82M241 784l235.500 82" stroke="#00f" stroke-width="5" />
                <g fill="#00f"><circle cx="240.500" cy="753.500" r="7.500" /><circle cx="476.500" cy="671.500" r="7.500" /><circle cx="240.500" cy="783.500" r="7.500" /><circle cx="476.500" cy="865.500" r="7.500" /><circle cx="197.500" cy="768.500" r="7.500" /></g>
                <!-- travel side view -->
                <rect x="763.500" y="472.500" width="546" height="296" fill="#fff" stroke="#000" />
                <rect x="816" y="518" width="445" height="207" fill="#c0c0c0" stroke="#808080" stroke-width="2" />
                <path d="M817 552.500h444M817 587.500h444M817 621.500h444M817 655.500h444M817 690.500h444M815 725h446" stroke="#000" />
                <path d="M815.500 725v5M890.500 725v5M964.500 725v5M1038.500 725v5M1112.500 725v5M1186.500 725v5M1260.500 725v5" stroke="#000" />
                <path d="M816 619h445" stroke="#800080" stroke-width="2" /><path d="M811 614l9 9M820 614l-9 9M815.500 614v9" stroke="#800080" />
                <path d="M890 597l17.700 2.200 16.600 6.400 14.100 10.100 10.900 13.300 6.900 15.400 2.300 16.600-2.300 16.600-6.900 15.400-10.900 13.300-14.100 10.100-16.600 6.400L890 725l-17.700-2.200-16.600-6.400-14.100-10.100-10.900-13.300-6.900-15.400-2.300-16.600 2.300-16.600 6.900-15.400 10.900-13.300 14.100-10.100 16.600-6.400z" stroke="#000" stroke-width="2" />
                <path d="M890 628l114-4" stroke="#00f" stroke-width="3" /><circle cx="890" cy="628" r="6" fill="#00f" /><circle cx="1004" cy="624" r="6" fill="#00f" />
                <path d="M901 656l152-14" stroke="#f00" stroke-width="3" /><circle cx="901" cy="656" r="6" fill="#f00" /><circle cx="1053" cy="642" r="6" fill="#f00" />
                <circle cx="890" cy="661" r="6.500" stroke="#000" stroke-width="2" />
                <text x="1210" y="535" text-anchor="middle" font-family="DejaVu Sans" font-size="16" font-weight="bold" fill="#000">Travel</text>
                <g font-family="DejaVu Sans" font-size="13" fill="#000" text-anchor="middle">
                    <text x="816" y="748">-20.000</text><text x="890" y="748">0.000</text><text x="964" y="748">20.000</text><text x="1038" y="748">40.000</text><text x="1113" y="748">60.000</text><text x="1187" y="748">80.000</text><text x="1261" y="748">100.000</text>
                </g>
                <!-- legend -->
                <rect x="1339.500" y="543.500" width="197" height="500" fill="#fff" stroke="#000" />
                <path d="M1363 594.500h44" stroke="#f00" stroke-width="5" stroke-linecap="round" /><circle cx="1384.500" cy="594.500" r="3.500" fill="#f00" />
                <path d="M1363 694.500h44" stroke="#00f" stroke-width="5" stroke-linecap="round" /><circle cx="1384.500" cy="694.500" r="3.500" fill="#00f" />
                <path d="M1364 794.500h21M1396 794.500h.5" stroke="#1e1" stroke-width="3" stroke-linecap="round" />
                <path d="M1363 895h16M1385 895h16" stroke="#6cdcf0" stroke-width="2" />
                <g font-size="15" fill="#000"><text x="1411" y="599">Lower Links</text><text x="1411" y="699">Upper Links</text><text x="1411" y="799">Anti-Squat Line</text><text x="1411" y="900">Anti-Squat CG</text></g>
            </svg>

            <button class="absolute left-[1214px] top-[193px] w-[151px] h-[37px] pr-[2px] pb-[2px] bg-[#f0f0f0] border-2 border-t-white border-l-white border-r-[#696969] border-b-[#696969]">Bump</button>
            <button class="absolute left-[1389px] top-[193px] w-[143px] h-[37px] pr-[2px] pb-[2px] bg-[#f0f0f0] border-2 border-t-white border-l-white border-r-[#696969] border-b-[#696969]">Droop</button>
        </div>

        <!-- Vertical scrollbar -->
        <div class="w-[30px] pl-[2px] pr-[3px] pt-px flex flex-col">
            <button aria-label="Scroll up" class="h-[25px] bg-white border border-[#b8b8b8] flex items-center justify-center"><svg class="w-[12px] h-[7px]"><path d="M0 7l6-7 6 7z" fill="#666" /></svg></button>
            <div class="flex-1 bg-[#dadada] pt-[10px]"><div class="h-[352px] bg-white border border-[#ababab]"></div></div>
            <button aria-label="Scroll down" class="h-[25px] bg-white border border-[#b8b8b8] flex items-center justify-center"><svg class="w-[12px] h-[7px]"><path d="M0 0h12l-6 7z" fill="#666" /></svg></button>
        </div>
    </main>

    <!-- Sheet tabs -->
    <div class="flex h-[34px] shrink-0 border-b border-[#c3c3c3] text-[19px] leading-5">
        <div class="w-[118px] flex items-start pt-[11px] pl-[29px] gap-[29px]">
            <button aria-label="Previous sheet" class="block"><svg class="w-[6px] h-[9px]"><path d="M6 0v9L0 4.500z" fill="#bbb" /></svg></button>
            <button aria-label="Next sheet" class="block"><svg class="w-[6px] h-[9px]"><path d="M0 0v9l6-4.500z" fill="#bbb" /></svg></button>
        </div>
        <button class="w-[73px] h-[30px] bg-white border-b-2 border-[#217346] text-[#217346] font-bold text-[18px]">Main</button>
        <button class="w-[201px] h-[26px] mt-[3px] pb-[3px] pr-[2px] border-r border-[#ababab]">VectorCalculations</button>
        <button class="w-[115px] h-[26px] mt-[3px] pb-[3px] pr-[2px] border-r border-[#ababab]">Travel (2)</button>
        <button class="w-[104px] h-[26px] mt-[3px] pb-[3px] pr-[2px] border-r border-[#ababab]">Material</button>
        <button class="w-[128px] h-[26px] mt-[3px] pb-[3px] pr-[2px] border-r border-[#ababab]">Coordinate</button>
        <button class="w-[62px] h-[26px] mt-[3px] pb-[3px] pr-[2px] border-r border-[#ababab]">Plot</button>
        <button class="w-[104px] h-[26px] mt-[3px] pb-[3px] pr-[2px] border-r border-[#ababab]">Revision</button>
        <button aria-label="New sheet" class="ml-[37px] mt-1 self-start"><svg class="w-[24px] h-[24px]" fill="none" stroke="#777"><circle cx="12" cy="12" r="11" /><path d="M6 12h12M12 6v12" stroke-width="2" /></svg></button>
        <div class="flex-1"></div>
        <svg class="w-[3px] h-[16px] mt-2 mr-[18px]" fill="#aaa"><path d="M0 0h3v3H0zM0 6h3v3H0zM0 12h3v3H0z" /></svg>
        <div class="w-[723px] h-[25px] mt-[3px] mr-[29px] flex bg-[#dadada]">
            <button aria-label="Scroll left" class="w-[25px] bg-white border border-[#b8b8b8] flex items-center justify-center"><svg class="w-[7px] h-[12px]"><path d="M7 0v12L0 6z" fill="#555" /></svg></button>
            <div class="w-[635px] bg-white border border-[#ababab]"></div>
            <button aria-label="Scroll right" class="ml-auto w-[25px] bg-white border border-[#b8b8b8] flex items-center justify-center"><svg class="w-[7px] h-[12px]"><path d="M0 0v12l7-6z" fill="#555" /></svg></button>
        </div>
    </div>

    <!-- Status bar -->
    <footer class="flex items-center h-[32px] shrink-0 bg-[#f1f1f1] text-[15px] text-[#555] pl-[7px] pr-[17px]">
        <span class="flex-1 pb-[2px]">Ready</span>
        <button aria-label="Normal view" class="w-[45px] h-full flex items-center justify-center bg-[#c8c8c8]"><svg class="w-[20px] h-[19px]" fill="none" stroke="#666"><path d="M.5.500h19v18H.5zM6.500.5v18M13.500.5v18M.5 6.500h19M.5 12.500h19" /></svg></button>
        <button aria-label="Page layout view" class="w-[45px] h-full flex items-center justify-center"><svg class="w-[20px] h-[19px]" fill="none" stroke="#666"><path d="M.5.500h19v18H.5zM4.500 3.500h11v12h-11zM7 6.500h6M7 9.500h6M7 12.500h6" /></svg></button>
        <button aria-label="Page break preview" class="w-[45px] h-full flex items-center justify-center"><svg class="w-[20px] h-[19px]" fill="none" stroke="#666"><path d="M.5.500h19v18H.5zM6.500.5v10M13.500.5v10M.5 10.500h13" /></svg></button>
        <button aria-label="Zoom out" class="ml-[5px] w-[12px]"><svg class="w-[12px] h-[12px]" stroke="#666" stroke-width="3"><path d="M0 6h12" /></svg></button>
        <div class="relative w-[148px] h-[20px] mx-[6px]">
            <span class="absolute left-[74px] top-[5px] w-px h-[10px] bg-[#999]"></span>
            <input type="range" aria-label="Zoom" min="0" max="100" value="42" class="absolute inset-0 w-full h-full appearance-none bg-transparent [&::-webkit-slider-runnable-track]:h-[2px] [&::-webkit-slider-runnable-track]:bg-[#a6a6a6] [&::-webkit-slider-thumb]:appearance-none [&::-webkit-slider-thumb]:w-[6px] [&::-webkit-slider-thumb]:h-[17px] [&::-webkit-slider-thumb]:-mt-[7px] [&::-webkit-slider-thumb]:bg-[#666]">
        </div>
        <button aria-label="Zoom in" class="w-[14px]"><svg class="w-[14px] h-[14px]" stroke="#666" stroke-width="3"><path d="M0 7h14M7 0v14" /></svg></button>
        <span class="w-[48px] pb-[2px] text-right">85%</span>
    </footer>

    <!-- Taskbar -->
    <div class="relative flex h-[60px] shrink-0 bg-black text-white">
        <svg class="absolute inset-0 w-full h-full" viewBox="0 0 1920 60" preserveAspectRatio="none"><path d="M604 0h168v60H553c8-12 16-22 24-32 8-8 16-18 27-28z" fill="#1a1a1a" /><path d="M772 0h319l41 60H772z" fill="#151515" /></svg>
        <div class="relative flex flex-1">
            <button aria-label="Start" class="w-[72px] flex items-center justify-center"><svg class="w-[24px] h-[24px]" viewBox="0 0 24 24" fill="#fff"><path d="M0 3.500l10-1.500v9.500H0zM11 1.800L24 0v11.500H11zM0 12.500h10V22L0 20.500zM11 12.500h13V24l-13-1.800z" /></svg></button>
            <button aria-label="Task view" class="w-[73px] flex items-center justify-center"><svg class="w-[30px] h-[20px]" fill="none" stroke="#fff"><path d="M6.500.5h17v19h-17zM4 3.500H.500v13H4M26 3.500h3.500v13H26" /></svg></button>
            <button aria-label="File Explorer" class="w-[79px] flex items-center justify-center"><svg class="w-[32px] h-[28px]" viewBox="0 0 32 28"><path d="M0 1h12l2 2h18v24H0z" fill="#f9de84" /><path d="M0 0h13l2 3-2 2H0z" fill="#e8b23a" /><path d="M2 2h6v2H2z" fill="#fff" /><path d="M5 15l2-2h17l2 2v12l-3 1-3-2v-6h-9v6l-3 2-3-1z" fill="#45a5ea" /></svg></button>
            <button aria-label="Store" class="w-[73px] flex items-center justify-center"><svg class="w-[34px] h-[36px]" viewBox="0 0 34 36"><path d="M1 11l32-3v25l-7 3-25-5z" fill="#fff" /><path d="M7 10C8-2 19-2 21 8M13 9c1-8 10-8 12-1" fill="none" stroke="#fff" stroke-width="1.500" /><path d="M7 16l6-1v5H7zM14 15l7-1v6h-7zM7 21h6v5l-6-1zM14 21h7v6l-7-1z" fill="#000" /></svg></button>
            <button aria-label="Word" class="relative w-[75px] flex items-center justify-center"><svg class="w-[32px] h-[32px]" viewBox="0 0 32 32"><path d="M17 3h14v26H17z" fill="#fff" stroke="#2b579a" /><path d="M19 7h9M19 11h9M19 15h9M19 19h9M19 23h9" stroke="#2b579a" stroke-width="2" /><path d="M0 4l19-4v32L0 28z" fill="#2b579a" /><text x="9.500" y="21" text-anchor="middle" font-family="Open Sans" font-size="14" font-weight="600" fill="#fff">W</text></svg><span class="absolute bottom-0 left-[7px] right-[7px] h-[3px] bg-[#f6bdb4]"></span></button>
            <button aria-label="Edge" class="relative w-[75px] flex items-center justify-center"><svg class="w-[30px] h-[32px]" viewBox="0 0 30 32"><path d="M0 14C2 4 8 0 16 0c9 0 14 6 14 14v4H10c0 9 11 10 18 6v6c-9 5-24 2-24-11 0-5 3-9 7-11-5 0-9 3-11 6zM10 13h12c0-8-11-8-12 0z" fill="#0a78d6" fill-rule="evenodd" /></svg><span class="absolute bottom-0 left-2 right-[6px] h-[3px] bg-[#f6bdb4]"></span></button>
            <button aria-label="Excel" class="relative w-[73px] ml-[2px] flex items-center justify-center bg-[#3c3c3c]"><svg class="w-[32px] h-[32px]" viewBox="0 0 32 32"><path d="M17 3h14v26H17z" fill="#fff" stroke="#217346" /><path d="M19 7h10M19 11h10M19 15h10M19 19h10M19 23h10M24.500 4v24" stroke="#217346" stroke-width="1.600" /><path d="M0 4l19-4v32L0 28z" fill="#217346" /><text x="9.500" y="22" text-anchor="middle" font-family="Open Sans" font-size="16" font-weight="600" fill="#fff">X</text></svg><span class="absolute bottom-0 inset-x-0 h-[3px] bg-[#f6bdb4]"></span></button>
        </div>
        <div class="relative flex items-center">
            <div class="w-[64px] h-[27px] mb-px border-[3px] border-white bg-black"><div class="w-[52px] h-full bg-[#1a9c4a] text-center text-[16px] leading-[20px]">86%</div></div>
            <span class="w-[3px] h-[13px] bg-white mr-[27px]"></span>
            <button aria-label="Show hidden icons" class="w-[48px] flex justify-center"><svg class="w-[19px] h-[11px]" fill="none" stroke="#fff" stroke-width="1.500"><path d="M1 10l8.500-9L18 10" /></svg></button>
            <button aria-label="Battery" class="w-[48px] flex justify-center"><svg class="w-[24px] h-[14px]" fill="none" stroke="#fff"><path d="M.5.500h21v13H.5zM23 5v4" /><path d="M3 3h16v8H3z" fill="#fff" stroke="none" /></svg></button>
            <button aria-label="OneDrive" class="w-[48px] flex justify-center"><svg class="w-[24px] h-[22px]" viewBox="0 0 24 22"><path d="M5 15c-6 0-6-7-1-8 0-7 9-9 12-4 5 1 6 12 0 12z" fill="#fff" /><path d="M3 12c0-5 4-7 8-5" fill="none" stroke="#999" /><circle cx="17" cy="15" r="6.500" fill="#fff" /><path d="M12.500 14a4.500 4.500 0 0 1 8-1.500M21.500 16a4.500 4.500 0 0 1-8 1.500M21.500 9.500v3.500H18M12.500 20.500V17H16" fill="none" stroke="#1f6fc0" stroke-width="1.800" /></svg></button>
            <button aria-label="Wi-Fi" class="w-[48px] flex justify-center"><svg class="w-[20px] h-[19px]" viewBox="0 0 20 19" fill="none" stroke="#ddd" stroke-width="1.300"><path d="M1 18C1 8 8 1 19 1M6 18C6 11 11 6 19 6M11 18c0-4 4-7 8-7" /><circle cx="17" cy="16.500" r="1.500" fill="#fff" stroke="#fff" /></svg></button>
            <button aria-label="Volume" class="w-[48px] flex justify-center"><svg class="w-[22px] h-[18px]" viewBox="0 0 22 18" fill="none" stroke="#fff" stroke-width="1.200"><path d="M1 6h4l5-5v16l-5-5H1zM14 6l7 7M21 6l-7 7" /></svg></button>
            <button aria-label="Pen" class="w-[60px] flex justify-center"><svg class="w-[22px] h-[20px]" viewBox="0 0 22 20" fill="none" stroke="#fff" stroke-width="1.400"><path d="M8 13L17 1l3 2-9 12-4 2zM8 9c-8 0-9 9-4 10 5 0 8-8 12-9 4 0 4 5 0 3" /></svg></button>
            <button aria-label="Touch keyboard" class="w-[58px] flex justify-center"><svg class="w-[34px] h-[20px]" fill="none" stroke="#fff"><path d="M.5.500h33v18H.5z" /><path d="M4 4.500h26M4 8.500h26M4 11.500h26" stroke-dasharray="2 2" /><path d="M4 15h4M10 15h14M26 15h4" stroke-width="1.500" /></svg></button>
            <button class="w-[108px] text-center leading-[28px]">5:17 PM<br>10/7/2017</button>
            <button aria-label="Notifications" class="w-[56px] flex justify-center"><svg class="w-[25px] h-[24px]" fill="none" stroke="#fff" stroke-width="1.300"><path d="M1 1h23v17h-8l-4 4.500V18H1z" /></svg></button>
            <span class="w-px h-full ml-[15px] mr-[6px] bg-[#666]"></span>
        </div>
    </div>

</body>

</html>
